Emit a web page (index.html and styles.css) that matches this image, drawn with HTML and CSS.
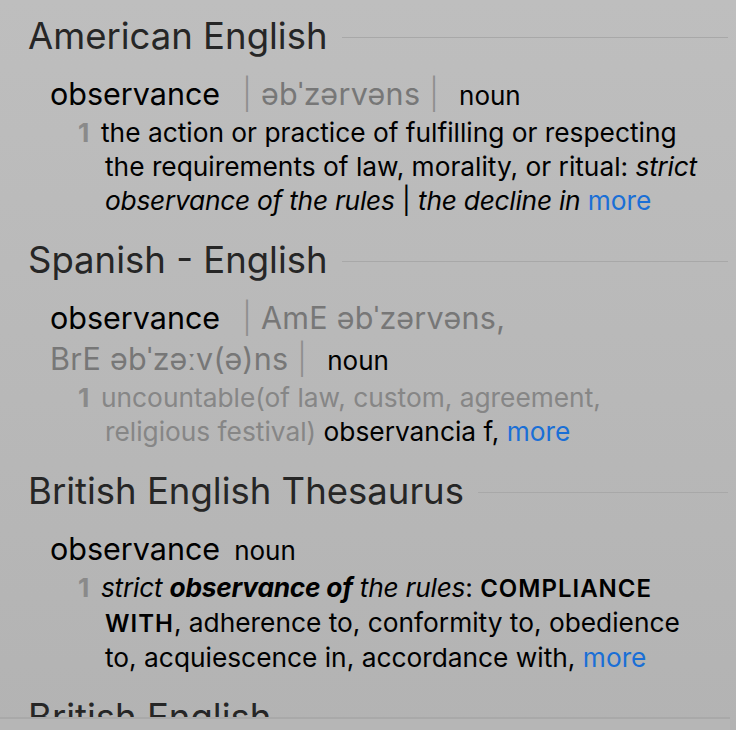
FILE: index.html
```html
<!DOCTYPE html>
<html lang="en">
<head>
<meta charset="utf-8">
<title>observance</title>
<link rel="stylesheet" href="styles.css">
</head>
<body>
<div class="panel">
  <section class="dict">
    <h2 class="dict-title"><span class="dict-name">American English</span></h2>
    <div class="entry">
      <div class="head"><span class="hw">observance</span><span class="pron"><span class="bar">|</span> əbˈzərvəns <span class="bar">|</span></span><span class="pos">noun</span></div>
      <p class="sense"><span class="num">1</span>the action or practice of fulfilling or respecting the requirements of law, morality, or ritual: <i>strict observance of the rules</i> | <i>the decline in</i> <a class="more" href="#">more</a></p>
    </div>
  </section>

  <section class="dict">
    <h2 class="dict-title"><span class="dict-name">Spanish - English</span></h2>
    <div class="entry">
      <div class="head"><span class="hw">observance</span><span class="pron"><span class="bar">|</span> AmE əbˈzərvəns,<br>BrE əbˈzəːv(ə)ns <span class="bar">|</span></span><span class="pos">noun</span></div>
      <p class="sense sense-grey"><span class="num">1</span>uncountable(of law, custom, agreement, religious festival) <span class="tr">observancia f,</span> <a class="more" href="#">more</a></p>
    </div>
  </section>

  <section class="dict">
    <h2 class="dict-title"><span class="dict-name">British English Thesaurus</span></h2>
    <div class="entry">
      <div class="head"><span class="hw">observance</span><span class="pos pos-tight">noun</span></div>
      <p class="sense"><span class="num">1</span><i>strict <b>observance of</b> the rules</i>: <span class="sc">COMPLIANCE WITH</span>, adherence to, conformity to, obedience to, acquiescence in, accordance with, <a class="more" href="#">more</a></p>
    </div>
  </section>

  <section class="dict">
    <h2 class="dict-title"><span class="dict-name">British English</span></h2>
  </section>

  <div class="scroll-edge"></div>
</div>
</body>
</html>
```

FILE: styles.css
```css
html, body {
  margin: 0;
  padding: 0;
}

body {
  width: 736px;
  height: 730px;
  overflow: hidden;
  background: linear-gradient(#bebebe, #b3b3b3);
  font-family: "Inter", "Liberation Sans", sans-serif;
  color: #000;
}

.panel {
  position: relative;
  height: 730px;
  overflow: hidden;
  padding: 13px 8px 0 28px;
  box-sizing: border-box;
}

.dict {
  margin-bottom: 19px;
}

.dict-title {
  display: flex;
  align-items: center;
  gap: 14px;
  margin: 0;
  font-size: 36.5px;
  font-weight: 400;
  line-height: 46px;
  color: #262626;
}

.dict-title::after {
  content: "";
  flex: 1;
  height: 1px;
  background: #a8a8a8;
  margin-top: 2px;
}

.entry {
  padding-left: 22px;
  padding-top: 14px;
}

.head {
  font-size: 30.5px;
  line-height: 41px;
}

.hw {
  color: #000;
  margin-right: 22px;
}

.pron {
  color: #777;
  letter-spacing: 0.3px;
}

.bar {
  color: #8e8e8e;
  font-weight: 300;
}

.pos {
  font-size: 26px;
  margin-left: 20px;
  color: #000;
}

.pos-tight {
  margin-left: -8px;
}

.sense {
  margin: 0 22px 0 0;
  padding-left: 55px;
  text-indent: -27px;
  font-size: 26.3px;
  line-height: 34px;
}

.sense i {
  letter-spacing: -0.25px;
}

.num {
  display: inline-block;
  width: 23px;
  text-indent: 0;
  color: #8a8a8a;
  font-weight: 700;
}

.sense-grey {
  color: #868686;
}

.tr {
  color: #000;
}

.sc {
  font-weight: 600;
  letter-spacing: 1px;
  font-size: 24px;
}

.more {
  color: #1a6fd6;
  text-decoration: none;
}

.scroll-edge {
  position: absolute;
  left: 0;
  right: 6px;
  bottom: 0;
  height: 11px;
  border-top: 2px solid #a9a9a9;
  background: #b6b6b6;
}
```
